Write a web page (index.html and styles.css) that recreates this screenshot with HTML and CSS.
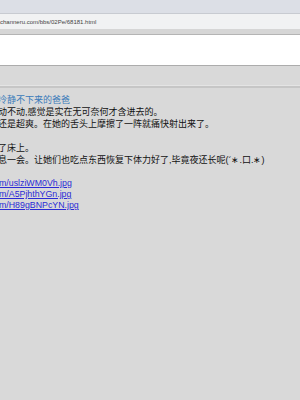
FILE: index.html
```html
<!DOCTYPE html>
<html lang="zh">
<head>
  <meta charset="UTF-8">
  <meta name="viewport" content="width=device-width, initial-scale=1.0">
  <title>冷静不下来的爸爸</title>
  <link rel="stylesheet" href="styles.css">
</head>
<body>
  <div class="chrome">
    <div class="tabs"></div>
    <div class="address"><span class="url">channeru.com/bbs/02Pe/68181.html</span></div>
    <div class="toolbar"></div>
  </div>

  <div class="blank"></div>
  <div class="band"></div>
  <div class="rule"></div>

  <div class="post">
    <div class="line title">冷静不下来的爸爸</div>
    <div class="line">动不动,感觉是实在无可奈何才含进去的。</div>
    <div class="line">还是超爽。在她的舌头上摩擦了一阵就痛快射出来了。</div>
    <div class="line">&nbsp;</div>
    <div class="line">了床上。</div>
    <div class="line">息一会。让她们也吃点东西恢复下体力好了,毕竟夜还长呢(´∗.口.∗)</div>
    <div class="line">&nbsp;</div>
    <div class="links">
      <a href="#">m/uslziWM0Vh.jpg</a>
      <a href="#">m/A5PjhthYGn.jpg</a>
      <a href="#">m/H89gBNPcYN.jpg</a>
    </div>
  </div>
</body>
</html>
```

FILE: styles.css
```css
html, body {
  margin: 0;
  padding: 0;
  background-color: #d9d9d9;
  font-family: "Liberation Sans", "Noto Sans CJK SC", sans-serif;
  overflow: hidden;
}

.tabs {
  height: 13px;
  background-color: #dcdfe6;
  border-bottom: 1px solid #c8cbd1;
}

.address {
  height: 15px;
  background-color: #f1f2f3;
  box-sizing: border-box;
  padding-top: 4px;
}

.url {
  display: block;
  font-size: 6px;
  line-height: 8px;
  color: #444;
  white-space: nowrap;
}

.toolbar {
  height: 5px;
  background-color: #d6d6d6;
  border-bottom: 1px solid #b4b4b4;
}

.blank {
  height: 30px;
  background-color: #fff;
  border-bottom: 1px solid #acacac;
}

.band {
  height: 19px;
  background-color: #d9d9d9;
  border-bottom: 1px solid #e4e4e4;
}

.rule {
  height: 2px;
  background-color: #c6c6c6;
}

.post {
  padding-top: 6px;
  margin-left: -2px;
  font-size: 9px;
  color: #111;
}

.line {
  line-height: 12px;
  white-space: nowrap;
}

.title {
  color: #3b7bb9;
}

.links {
  display: flex;
  flex-direction: column;
  margin-left: 1px;
  font-size: 8.8px;
  line-height: 11px;
}

.links a {
  color: #2b2bd6;
  text-decoration: underline;
}
```
